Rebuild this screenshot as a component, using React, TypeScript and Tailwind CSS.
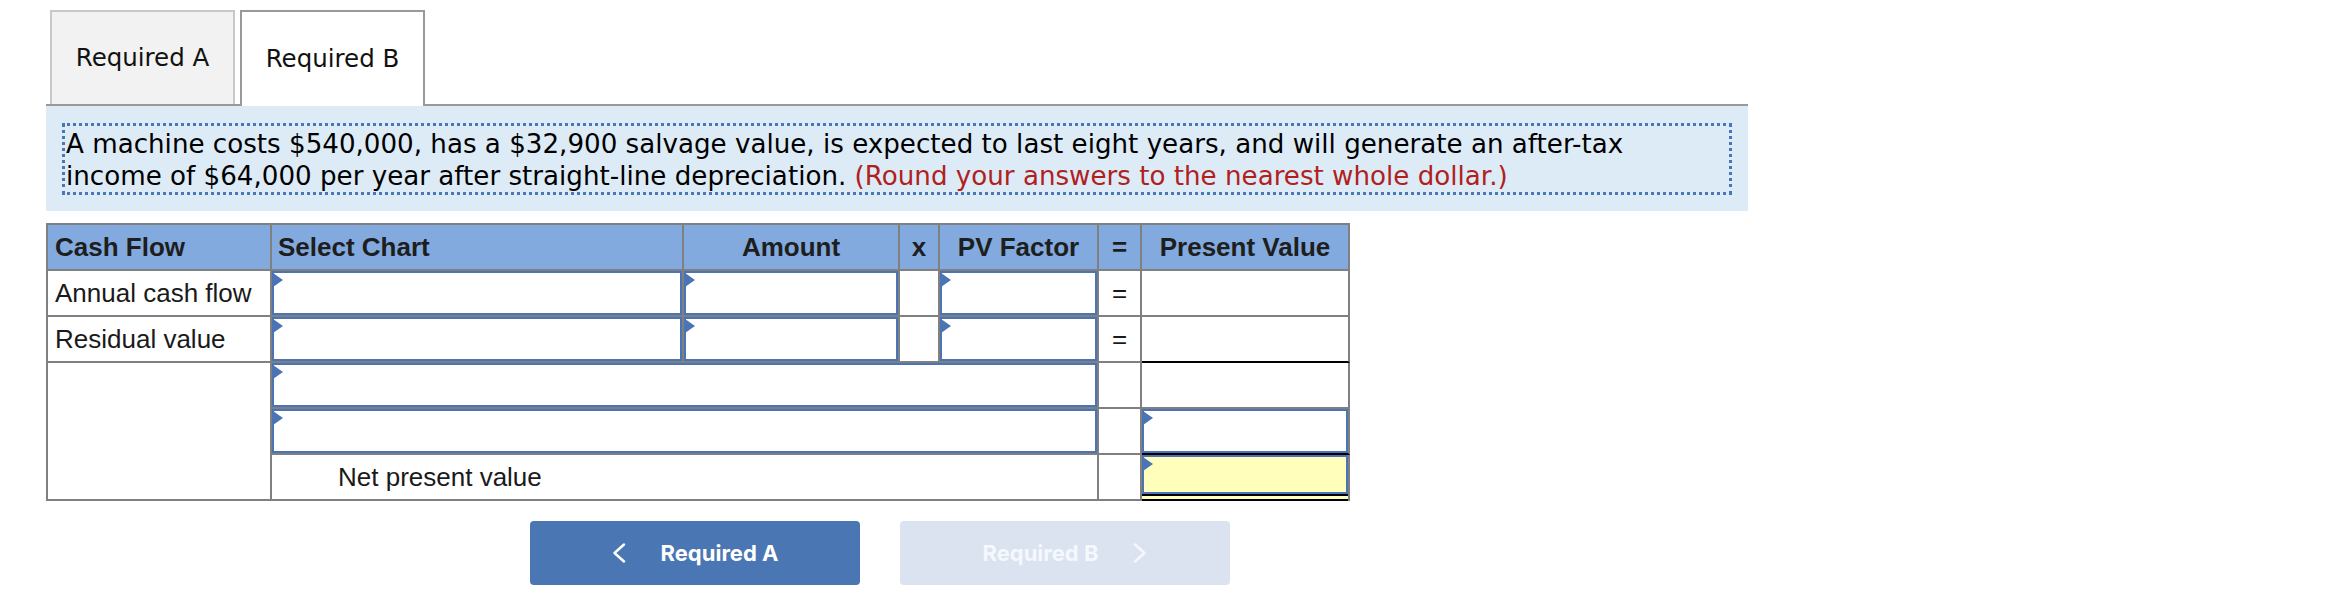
import React from 'react';

const cell = 'border-r-2 border-b-2 border-[#808080]';
const head = `${cell} flex items-center bg-[#82aade] font-bold text-[#1e1e1e]`;

// little blue marker in the corner of an answer box
function Marker() {
  return (
    <span className="absolute -left-[1px] top-0 h-0 w-0 border-y-[7px] border-l-[10px] border-y-transparent border-l-[#4a74b4]" />
  );
}

function Field({ className = '' }: { className?: string }) {
  return (
    <div className={`relative h-full border-2 border-[#4a74b4] ${className}`}>
      <Marker />
    </div>
  );
}

function Chevron({ dir }: { dir: 'left' | 'right' }) {
  return (
    <svg width="14" height="20" viewBox="0 0 14 20" fill="none" stroke="currentColor" strokeWidth="2.4" strokeLinecap="round" strokeLinejoin="round">
      {dir === 'left' ? <polyline points="12,1.5 2.5,10 12,18.5" /> : <polyline points="2,1.5 11.5,10 2,18.5" />}
    </svg>
  );
}

export default function App() {
  return (
    <div className="min-h-[608px] w-[2338px] bg-white pt-[10px] text-[#111]">
      {/* tabs */}
      <div className="ml-[50px] flex gap-[5px] font-['DejaVu_Sans',sans-serif] text-[24.5px]">
        <div className="flex h-[94px] w-[185px] items-center justify-center border-2 border-b-0 border-[#c8c8c8] bg-[#f2f2f2]">
          Required A
        </div>
        <div className="relative z-10 -mb-[2px] flex h-[96px] w-[185px] items-center justify-center border-2 border-b-0 border-[#999999] bg-white">
          Required B
        </div>
      </div>

      {/* question */}
      <div className="ml-[46px] w-[1702px] border-t-2 border-[#999999] bg-[#ddebf7] px-[16px] pb-[16px] pt-[17px]">
        <p className="border-[3px] border-dotted border-[#4a76b8] pl-[1px] pt-[2px] pb-[0px] font-['DejaVu_Sans',sans-serif] text-[26.15px] leading-[32px] text-black">
          A machine costs $540,000, has a $32,900 salvage value, is expected to last eight years, and will generate an after-tax
          <br />
          income of $64,000 per year after straight-line depreciation.{' '}
          <span className="text-[#b0211e]">(Round your answers to the nearest whole dollar.)</span>
        </p>
      </div>

      {/* worksheet */}
      <div className="ml-[46px] mt-[12px] grid w-[1304px] grid-cols-[224px_412px_216px_40px_159px_43px_208px] grid-rows-[46px_46px_46px_46px_46px_46px] border-l-2 border-t-2 border-[#808080] font-['Liberation_Sans',Arial,sans-serif] text-[26px] text-[#1a1a1a]">
        <div className={`${head} pl-[7px]`}>Cash Flow</div>
        <div className={`${head} pl-[6px]`}>Select Chart</div>
        <div className={`${head} justify-center`}>Amount</div>
        <div className={`${head} justify-center`}>x</div>
        <div className={`${head} justify-center`}>PV Factor</div>
        <div className={`${head} justify-center`}>=</div>
        <div className={`${head} justify-center`}>Present Value</div>

        <div className={`${cell} flex items-center pl-[7px]`}>Annual cash flow</div>
        <div className={cell}><Field /></div>
        <div className={cell}><Field /></div>
        <div className={cell} />
        <div className={cell}><Field /></div>
        <div className={`${cell} flex items-center justify-center`}>=</div>
        <div className={cell} />

        <div className={`${cell} flex items-center pl-[7px]`}>Residual value</div>
        <div className={cell}><Field /></div>
        <div className={cell}><Field /></div>
        <div className={cell} />
        <div className={cell}><Field /></div>
        <div className={`${cell} flex items-center justify-center`}>=</div>
        <div className="border-b-2 border-r-2 border-b-black border-r-[#808080]" />

        <div className={`${cell} row-span-3`} />
        <div className={`${cell} col-span-4`}><Field /></div>
        <div className={cell} />
        <div className={cell} />

        <div className={`${cell} col-span-4`}><Field /></div>
        <div className={cell} />
        <div className="border-b-2 border-r-2 border-b-black border-r-[#808080]"><Field /></div>

        <div className={`${cell} col-span-4 flex items-center pl-[66px]`}>Net present value</div>
        <div className={cell} />
        <div className="flex flex-col border-r-2 border-[#808080]">
          <Field className="bg-[#ffffbb]" />
          <div className="h-[7px] shrink-0 border-y-2 border-black bg-[#ffffbb]" />
        </div>
      </div>

      {/* navigation */}
      <div className="ml-[530px] mt-[20px] flex gap-[40px] font-['Inter',sans-serif] text-[22px] font-bold">
        <button className="flex h-[64px] w-[330px] items-center justify-center gap-[35px] rounded-[4px] bg-[#4a76b4] text-white">
          <Chevron dir="left" />
          <span>Required A</span>
        </button>
        <button className="flex h-[64px] w-[330px] items-center justify-center gap-[35px] rounded-[4px] bg-[#dae3ef] text-[#f5f8fc]">
          <span>Required B</span>
          <Chevron dir="right" />
        </button>
      </div>
    </div>
  );
}
